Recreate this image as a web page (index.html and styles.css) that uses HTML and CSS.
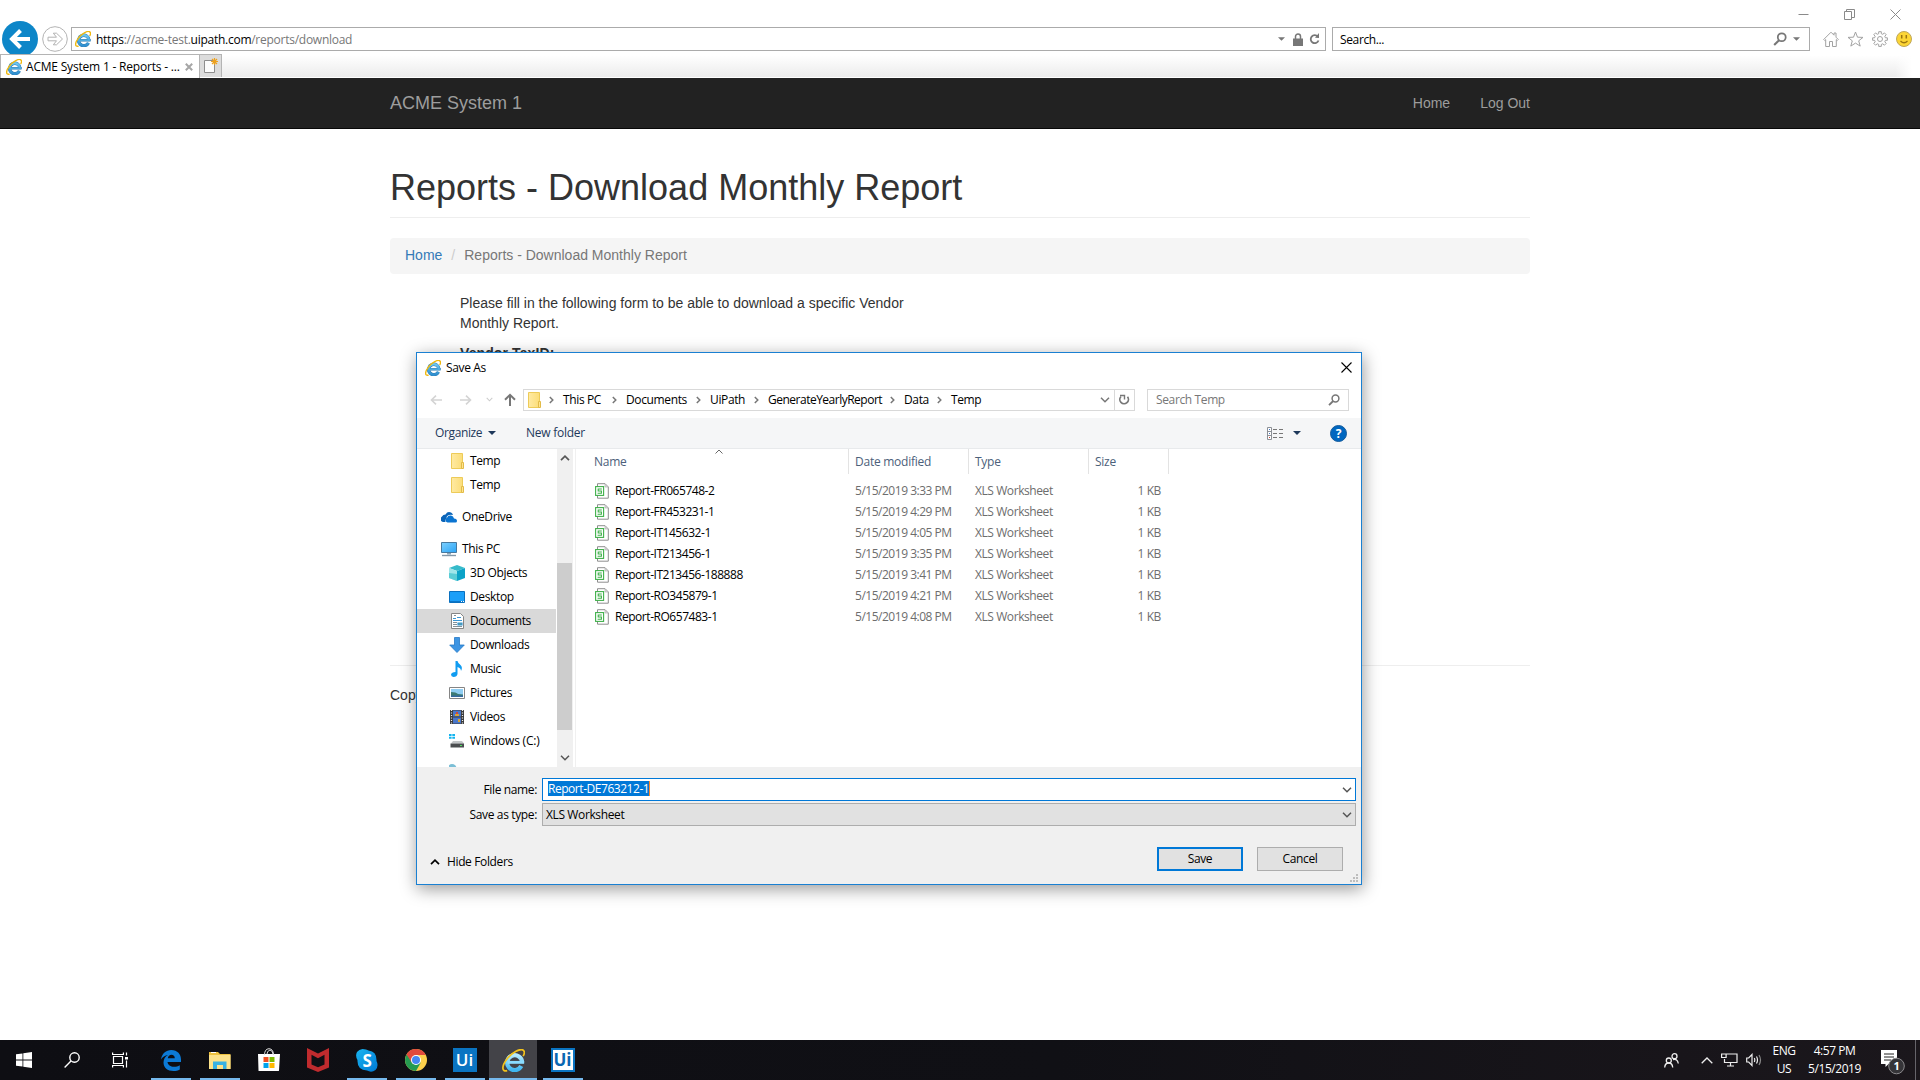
FILE: index.html
```html
<!DOCTYPE html>
<html lang="en">
<head>
<meta charset="utf-8">
<title>ACME System 1 - Reports - Download Monthly Report</title>
<link rel="stylesheet" href="styles.css">
</head>
<body>
<svg class="defs" aria-hidden="true">
  <defs>
    <linearGradient id="ieBlue" x1="0" y1="0" x2="0" y2="1"><stop offset="0" stop-color="#6cc5f0"/><stop offset="1" stop-color="#2f8fd0"/></linearGradient>
    <linearGradient id="ieLight" x1="0" y1="0" x2="0" y2="1"><stop offset="0" stop-color="#b5ecff"/><stop offset="1" stop-color="#3fb6f0"/></linearGradient>
    <linearGradient id="folderFill" x1="0" y1="0" x2="1" y2="0"><stop offset="0" stop-color="#ffeaa3"/><stop offset="1" stop-color="#fbdd78"/></linearGradient>
    <linearGradient id="screenFill" x1="0" y1="0" x2="1" y2="1"><stop offset="0" stop-color="#7cd0ff"/><stop offset="1" stop-color="#2ba4f5"/></linearGradient>
    <linearGradient id="skypeFill" x1="0" y1="0" x2="1" y2="1"><stop offset="0" stop-color="#18b5f0"/><stop offset="1" stop-color="#0078d4"/></linearGradient>
    <symbol id="ie" viewBox="0 0 16 16">
      <path d="M13.400 11.900A5.200 5.200 0 1 1 14 9.400" fill="none" stroke="#2a78ad" stroke-width="3.300"/>
      <path d="M4 9.300H15.600" stroke="#2a78ad" stroke-width="2.400"/>
      <path d="M13.500 11.700A5.200 5.200 0 1 1 14 9.400" fill="none" stroke="url(#ieBlue)" stroke-width="2.500"/>
      <path d="M4 9.300H15.200" stroke="#4fabdf" stroke-width="1.600"/>
      <path d="M3.600 15.100C-.4 16.200-.2 11.800 3.200 7.300C7 2.200 13 -.7 14.900 .9C15.900 1.800 15.500 3.600 14.700 5" fill="none" stroke="#efb810" stroke-width="1.400"/>
    </symbol>
    <symbol id="ie-glow" viewBox="0 0 16 16">
      <path d="M13.400 11.900A5.200 5.200 0 1 1 14 9.400" fill="none" stroke="url(#ieLight)" stroke-width="3"/>
      <path d="M4 9.300H15.400" stroke="#8adcff" stroke-width="2"/>
      <path d="M3.600 15.100C-.4 16.200-.2 11.800 3.200 7.300C7 2.200 13 -.7 14.900 .9C15.900 1.800 15.500 3.600 14.700 5" fill="none" stroke="#f2c21c" stroke-width="1.200"/>
    </symbol>
    <symbol id="folder" viewBox="0 0 13 16">
      <path d="M.5.5h11v15H.5z" fill="url(#folderFill)" stroke="#edcb58"/>
      <path d="M10.500 9.500h2v6h-2z" fill="#ffe48f" stroke="#e2bb48"/>
    </symbol>
    <symbol id="sheet" viewBox="0 0 14 16">
      <path d="M2.500.700h7.500l3.300 3.300v11.200H2.500z" fill="#fff" stroke="#8e8e8e"/>
      <path d="M10 .7v3.300h3.300z" fill="#ddd" stroke="#aaa" stroke-width=".6"/>
      <rect x=".6" y="3.600" width="8" height="8.800" fill="#fff" stroke="#3fb04a" stroke-width="1.100"/>
      <path d="M6.800 6H3.200v2h3.200v2.200H2.600" fill="none" stroke="#3fb04a" stroke-width="1.100"/>
    </symbol>
    <symbol id="chev-r" viewBox="0 0 5 8"><path d="M.8 1l3 3-3 3" fill="none" stroke="#777" stroke-width="1.500"/></symbol>
    <symbol id="chev-d" viewBox="0 0 10 6"><path d="M1 .8l4 4 4-4" fill="none" stroke="currentColor" stroke-width="1.500"/></symbol>
    <symbol id="chev-u" viewBox="0 0 10 6"><path d="M1 5.200l4-4 4 4" fill="none" stroke="currentColor" stroke-width="1.700"/></symbol>
    <symbol id="tri" viewBox="0 0 8 4"><path d="M0 0h8L4 4z" fill="currentColor"/></symbol>
    <symbol id="lens" viewBox="0 0 12 12"><circle cx="7.500" cy="4.500" r="3.400" fill="none" stroke="currentColor" stroke-width="1.500"/><path d="M5.200 7L1 11.200" stroke="currentColor" stroke-width="1.800"/></symbol>
  </defs>
</svg>

<header class="chrome">
  <div class="window-controls">
    <svg width="11" height="11"><path d="M.5 5.500h10" stroke="#8a8a8a"/></svg>
    <svg width="11" height="11" fill="none" stroke="#8a8a8a"><path d="M.5 2.500h7v8h-7zM2.500 2.500v-2h8v8h-3"/></svg>
    <svg width="11" height="11"><path d="M.5.5l10 10M10.500.5l-10 10" stroke="#8a8a8a"/></svg>
  </div>
  <div class="address-row">
    <svg class="back" viewBox="0 0 36 36"><circle cx="18" cy="18" r="18" fill="#0d86c8"/><path d="M28 18H10M18.500 9.500L10 18l8.500 8.500" fill="none" stroke="#fff" stroke-width="4"/></svg>
    <svg class="forward" viewBox="0 0 26 26" fill="none" stroke="#b3b3b3"><circle cx="13" cy="13" r="12.300"/><path d="M6 11.200h8.500l-3.200-4h3.200l6 5.800-6 5.800h-3.200l3.200-4H6z"/></svg>
    <div class="address">
      <svg width="16" height="16"><use href="#ie"/></svg>
      <span class="url"><b>https</b>://acme-test.<b>uipath.com</b>/reports/download</span>
      <svg class="addr-tri" width="7" height="4"><use href="#tri"/></svg>
      <svg class="lock" width="10" height="13" viewBox="0 0 10 13"><path d="M2.500 6V3.500a2.500 2.500 0 0 1 5 0V6" fill="none" stroke="#777" stroke-width="1.500"/><path d="M0 5.500h10V13H0z" fill="#777"/></svg>
      <svg width="11" height="12" viewBox="0 0 11 12"><path d="M8.800 3.600A4 4 0 1 0 9.500 7.500" fill="none" stroke="#777" stroke-width="1.800"/><path d="M6 4.800L10 5V0z" fill="#777"/></svg>
    </div>
    <div class="search">
      <span>Search...</span>
      <svg width="14" height="14"><use href="#lens"/></svg>
      <svg class="search-tri" width="7" height="4"><use href="#tri"/></svg>
    </div>
    <div class="tools">
      <svg width="16" height="16" fill="none" stroke="#a2a2a2"><path d="M.7 8.500L8 1.200l3 3V2h2v4.200l2.300 2.300-1 1-1-.9v6.900H9.500v-5h-3v5H2.700V8.600l-1 .9z"/></svg>
      <svg width="17" height="16" viewBox="0 0 17 16" fill="none" stroke="#a2a2a2"><path d="M8.500 1l2 5.200 5.500.2-4.300 3.400 1.500 5.300-4.700-3-4.700 3 1.500-5.300L1 6.400l5.500-.2z"/></svg>
      <svg width="16" height="16" viewBox="0 0 16 16" fill="none" stroke="#a2a2a2"><path d="M6.700.7h2.600v2l1.500.6 1.600-1.400 1.800 1.800-1.400 1.600.6 1.500h2v2.500h-2l-.6 1.500 1.400 1.600-1.800 1.800-1.600-1.400-1.500.6v2H6.700v-2l-1.500-.6-1.600 1.400-1.800-1.800 1.400-1.600-.6-1.500h-2V6.800h2l.6-1.500-1.400-1.600 1.800-1.800 1.600 1.400 1.500-.6z"/><circle cx="8" cy="8" r="2.500"/></svg>
      <svg width="16" height="16"><circle cx="8" cy="8" r="7.500" fill="#fcd535" stroke="#bfa75a"/><path d="M5.700 4v3.400M10.300 4v3.400" stroke="#9a7410" stroke-width="1.500"/><path d="M4.500 10q3.500 3.500 7 0" fill="none" stroke="#9a7410" stroke-width="1.200"/></svg>
    </div>
  </div>
  <div class="tabs">
    <div class="tab">
      <svg width="16" height="16"><use href="#ie"/></svg>
      <span>ACME System 1 - Reports - ...</span>
      <svg class="tab-x" width="8" height="8"><path d="M.8.8l6.400 6.400M7.200.8L.8 7.200" stroke="#a6a6a6" stroke-width="2"/></svg>
    </div>
    <div class="new-tab"><svg width="14" height="15"><path d="M.5 2.500h10v12H.5z" fill="#fcfcfc" stroke="#8e8e8e"/><path d="M10.500 0v7M7 3.500h7M8 1l5 5M13 1L8 6" stroke="#eda11e" stroke-width="1.200"/></svg></div>
  </div>
</header>

<main class="site">
  <nav class="navbar"><div class="container nav-inner"><span class="brand">ACME System 1</span><span>Home</span><span>Log Out</span></div></nav>
  <div class="container">
    <h1>Reports - Download Monthly Report</h1>
    <div class="crumbs"><a>Home</a><i>/</i><span>Reports - Download Monthly Report</span></div>
    <div class="form"><p>Please fill in the following form to be able to download a specific Vendor Monthly Report.</p><label>Vendor TaxID:</label></div>
    <footer>Copyright</footer>
  </div>
</main>

<section class="dialog">
  <div class="dlg-title">
    <svg width="16" height="16"><use href="#ie"/></svg><span>Save As</span>
    <svg class="dlg-close" width="11" height="11"><path d="M.5.5l10 10M10.500.5l-10 10" stroke="#000" stroke-width="1.100"/></svg>
  </div>
  <div class="dlg-nav">
    <svg class="nav-back" width="12" height="10" fill="none" stroke="#d4d4d4" stroke-width="1.600"><path d="M12 5H1.500M6 .7L1.500 5 6 9.300"/></svg>
    <svg class="nav-fwd" width="12" height="10" fill="none" stroke="#d4d4d4" stroke-width="1.600"><path d="M0 5h10.500M6 .7L10.500 5 6 9.300"/></svg>
    <svg class="nav-recent" width="7" height="5"><use href="#chev-d"/></svg>
    <svg class="nav-up" width="12" height="13" fill="none" stroke="#777" stroke-width="2"><path d="M6 13V2M1 6.800l5-5 5 5"/></svg>
    <div class="path">
      <svg class="path-folder" width="13" height="16"><use href="#folder"/></svg>
      <svg class="sep" width="5" height="8"><use href="#chev-r"/></svg><span class="w-pc">This PC</span>
      <svg class="sep" width="5" height="8"><use href="#chev-r"/></svg><span class="w-docs">Documents</span>
      <svg class="sep" width="5" height="8"><use href="#chev-r"/></svg><span class="w-ui">UiPath</span>
      <svg class="sep" width="5" height="8"><use href="#chev-r"/></svg><span class="w-gen">GenerateYearlyReport</span>
      <svg class="sep" width="5" height="8"><use href="#chev-r"/></svg><span class="w-data">Data</span>
      <svg class="sep" width="5" height="8"><use href="#chev-r"/></svg><span class="w-temp">Temp</span>
      <svg class="path-drop" width="10" height="6"><use href="#chev-d"/></svg>
      <span class="reload"><svg width="11" height="12"><path d="M2 2.500A4.300 4.300 0 1 0 8.500 2.800" fill="none" stroke="#777" stroke-width="1.700"/><path d="M1 1.500h4.500v4" fill="none" stroke="#777" stroke-width="1.400"/></svg></span>
    </div>
    <div class="find"><span>Search Temp</span><svg width="12" height="12"><use href="#lens"/></svg></div>
  </div>
  <div class="toolbar">
    <span class="organize">Organize</span><svg class="org-tri" width="8" height="4"><use href="#tri"/></svg><span class="new-folder">New folder</span>
    <svg class="view" width="16" height="13"><path d="M.5.500h4v12h-4zM.5 4.500h4M.5 8.500h4" fill="#fff" stroke="#8c9096"/><path d="M6 2.500h10M6 6.500h10M6 10.500h10" stroke="#777" stroke-dasharray="4 2"/><path d="M2 2.500h1M2 6.500h1" stroke="#467ac5"/><path d="M2 10.500h1" stroke="#c43"/></svg>
    <svg class="view-tri" width="8" height="4"><use href="#tri"/></svg>
    <span class="help">?</span>
  </div>
  <div class="browse">
    <ul class="tree">
      <li class="sub"><svg class="fold"><use href="#folder"/></svg>Temp</li>
      <li class="sub"><svg class="fold"><use href="#folder"/></svg>Temp</li>
      <li class="root"><svg viewBox="0 0 16 16"><path d="M2 13a3 3 0 0 1-1-5.500Q2 5.500 4.500 5.500 6.500 2 10 3.500q1.500.7 2 2.500Q5.500 5 5.500 9.500 4 10.500 4.500 13z" fill="#0a64b8"/><path d="M6.500 13.500a2.500 2.500 0 0 1-.5-4.700Q7 6 10 6.500q2.500.5 3 3 3 .3 3 2.500 0 1.500-1.500 1.500z" fill="#0a74d1"/></svg>OneDrive</li>
      <li class="root"><svg viewBox="0 0 16 16"><path d="M.5 1.500h15v10H.5z" fill="url(#screenFill)" stroke="#47799f"/><path d="M6 12h4v1.500H6z" fill="#8ba5b8"/><path d="M1 14.500h14" stroke="#8398a8" stroke-width="1.400"/></svg>This PC</li>
      <li class="sub"><svg viewBox="0 0 16 16"><path d="M0 3l8-3 8 3-8 3z" fill="#36bbca"/><path d="M0 3l8 3v10l-8-3z" fill="#9fe5ea"/><path d="M16 3L8 6v10l8-3z" fill="#0ba2c7"/><path d="M0 8l8 1v7l-8-3z" fill="#5accd6"/></svg>3D Objects</li>
      <li class="sub"><svg viewBox="0 0 16 16"><path d="M.5 2.500h15v11H.5z" fill="#1c9ff8" stroke="#0a70bf"/><path d="M1 12.500h14" stroke="#0b76c8"/><path d="M12 12.500h1M14 12.500h1" stroke="#fff"/></svg>Desktop</li>
      <li class="sub selected"><svg viewBox="0 0 16 16"><path d="M2.500.5h9l3 3v12h-12z" fill="#fff" stroke="#858585"/><path d="M4 5.500h3M8 4.500h4M4 7.500h9M9 10h4v2H9z" stroke="#3b97d3" stroke-width="1.200" fill="#5d9f8f"/><path d="M5 2.500h2M4 9.500h4M4 11.500h4M4 13.500h9" stroke="#829099"/></svg>Documents</li>
      <li class="sub"><svg viewBox="0 0 16 16"><path d="M5.500.5h5V8h4.800L8 15.500.7 8h4.800z" fill="#3d95e3" stroke="#2479c7" stroke-width=".8"/></svg>Downloads</li>
      <li class="sub"><svg viewBox="0 0 16 16"><path d="M6.500 0h2q.5 2.500 3 4 2.500 2.500.5 6 0-3-3.500-4V13q-.5 3-4 3Q2 15.700 2 13.500q.5-2.500 4.500-2.500z" fill="#109cf1"/></svg>Music</li>
      <li class="sub"><svg viewBox="0 0 16 16"><path d="M.5 2.500h15v11H.5z" fill="#fff" stroke="#858585"/><path d="M2 4h12v8H2z" fill="#8fcdf2"/><path d="M2 7q5 0 7 2l5 .5V12H2z" fill="#3d7a73"/><path d="M2 10.500h12V12H2z" fill="#356aa0"/></svg>Pictures</li>
      <li class="sub"><svg viewBox="0 0 16 16"><path d="M1 1h14v14H1z" fill="#3b3b3b"/><path d="M4 1.500h8v6H4zM4 8.500h8v6H4z" fill="#4976c9"/><path d="M6 5h4v2H6zM9 10h2v3H9z" fill="#d9a335"/><path d="M7 3h2v2H7z" fill="#d0473c"/><path d="M2.500 1v14M13.500 1v14" stroke="#eee" stroke-width="1.200" stroke-dasharray="1 1.500"/></svg>Videos</li>
      <li class="sub wide"><svg viewBox="0 0 16 16"><path d="M0 1h2.600v2H0zM3.300 1H6v2H3.300zM0 3.700h2.600v2H0zM3.300 3.700H6v2H3.300z" fill="#12b4f0"/><path d="M4 8h9l2 2.500H2z" fill="#c2c5c7"/><path d="M1.500 10.500h13.500v4H1.500z" fill="#4b4e50"/><path d="M11 12.500h2" stroke="#50e060"/></svg>Windows (C:)</li>
      <li class="sub last"><svg viewBox="0 0 16 16"><circle cx="3" cy="4.500" r="4.500" fill="#7cbfd6"/></svg></li>
    </ul>
    <div class="scroll"><svg width="10" height="6"><use href="#chev-u"/></svg><i></i><svg width="10" height="6"><use href="#chev-d"/></svg></div>
    <div class="files">
      <svg class="sort" width="8" height="5"><path d="M.5 4.500L4 1l3.500 3.500" fill="none" stroke="#666"/></svg>
      <div class="frow fhead"><span class="c-name">Name</span><span class="c-date">Date modified</span><span class="c-type">Type</span><span class="c-size">Size</span></div>
      <div class="frow"><span class="c-name"><svg><use href="#sheet"/></svg>Report-FR065748-2</span><span class="c-date">5/15/2019 3:33 PM</span><span class="c-type">XLS Worksheet</span><span class="c-size">1 KB</span></div>
      <div class="frow"><span class="c-name"><svg><use href="#sheet"/></svg>Report-FR453231-1</span><span class="c-date">5/15/2019 4:29 PM</span><span class="c-type">XLS Worksheet</span><span class="c-size">1 KB</span></div>
      <div class="frow"><span class="c-name"><svg><use href="#sheet"/></svg>Report-IT145632-1</span><span class="c-date">5/15/2019 4:05 PM</span><span class="c-type">XLS Worksheet</span><span class="c-size">1 KB</span></div>
      <div class="frow"><span class="c-name"><svg><use href="#sheet"/></svg>Report-IT213456-1</span><span class="c-date">5/15/2019 3:35 PM</span><span class="c-type">XLS Worksheet</span><span class="c-size">1 KB</span></div>
      <div class="frow"><span class="c-name"><svg><use href="#sheet"/></svg>Report-IT213456-188888</span><span class="c-date">5/15/2019 3:41 PM</span><span class="c-type">XLS Worksheet</span><span class="c-size">1 KB</span></div>
      <div class="frow"><span class="c-name"><svg><use href="#sheet"/></svg>Report-RO345879-1</span><span class="c-date">5/15/2019 4:21 PM</span><span class="c-type">XLS Worksheet</span><span class="c-size">1 KB</span></div>
      <div class="frow"><span class="c-name"><svg><use href="#sheet"/></svg>Report-RO657483-1</span><span class="c-date">5/15/2019 4:08 PM</span><span class="c-type">XLS Worksheet</span><span class="c-size">1 KB</span></div>
    </div>
  </div>
  <div class="fields">
    <label>File name:</label><div class="input"><mark>Report-DE763212-1</mark><svg width="10" height="6"><use href="#chev-d"/></svg></div>
    <label>Save as type:</label><div class="select"><span>XLS Worksheet</span><svg width="10" height="6"><use href="#chev-d"/></svg></div>
  </div>
  <div class="actions">
    <span class="hide"><svg width="10" height="6"><use href="#chev-u"/></svg>Hide Folders</span>
    <span class="btn primary">Save</span><span class="btn">Cancel</span>
    <svg class="grip" width="8" height="8" fill="#bdbdbd"><path d="M6 0h2v2H6zM3 3h2v2H3zM6 3h2v2H6zM0 6h2v2H0zM3 6h2v2H3zM6 6h2v2H6z"/></svg>
  </div>
</section>

<footer class="taskbar">
  <div class="app w48"><svg width="16" height="16" fill="#fff"><path d="M0 2.300L6.500 1.400v6.200H0zM7.300 1.300L16 0v7.600H7.300zM0 8.400h6.500v6.200L0 13.700zM7.300 8.400H16V16l-8.700-1.300z"/></svg></div>
  <div class="app w48"><svg width="16" height="16" fill="none" stroke="#fff" stroke-width="1.400"><circle cx="10.500" cy="5.500" r="4.700"/><path d="M7 9L.6 15.400"/></svg></div>
  <div class="app w48"><svg width="16" height="16" fill="none" stroke="#fff" stroke-width="1.200"><path d="M1.500 4.500h9v7h-9zM.6.500v2h10.800v-2M.6 15.500v-2h10.800v2M14.500.500v3M14.500 8.500v7"/><path d="M13 5h3v2.500h-3z" fill="#fff" stroke="none"/></svg></div>
  <div class="app gap-l on"><svg width="20" height="21" viewBox="0 0 20 21"><path d="M0 9.500C1 3.500 5 0 10.300 0 16.500 0 20 4.300 20 9.500V12H6.500c.3 3 3 4.800 6.500 4.800 2.200 0 4-.6 5.800-1.600v4.200C17 20.400 15 21 12.500 21 6.500 21 2.500 17.500 2.500 12.500c0-3.200 1.700-6 4.500-7.500C4 5.200 1.500 7 0 9.500zM6.800 8.300h7c0-2.200-1.300-3.600-3.300-3.600S7.200 6 6.800 8.300z" fill="#0c7ad6"/></svg></div>
  <div class="app on"><svg width="22" height="19"><path d="M0 1h9l2 2h10.500v15H0z" fill="#eec13f"/><path d="M0 4h21.500v14H0z" fill="#fde28a"/><path d="M2 1.500h5" stroke="#fff"/><path d="M4 10.500h13.500V18h-3.500v-4H8v4H4z" fill="#38b2e3"/></svg></div>
  <div class="app"><svg width="24" height="24"><path d="M1 6h22l-1 16.500q0 .5-1 .5H2q-.5 0-.5-.5z" fill="#fff"/><path d="M7.500 7q0-6 4.500-6.300Q16.500 1 16.500 7M10 6q0-3 3-4 3 1 3 4" fill="none" stroke="#ddd"/><path d="M6.500 9h5v5h-5z" fill="#f05022"/><path d="M12.500 9h5v5h-5z" fill="#7eba00"/><path d="M6.500 15h5v5h-5z" fill="#00a2ed"/><path d="M12.500 15h5v5h-5z" fill="#ffb800"/></svg></div>
  <div class="app"><svg width="22" height="24"><path d="M0 0l11 5.500L22 0v19.500L11 24 0 19.500zM4.500 6.800V16.500l6.500 2.700 6.500-2.700V6.800L11 10.200z" fill="#c02b2e" fill-rule="evenodd"/></svg></div>
  <div class="app on"><svg width="22" height="23"><path d="M6.500 0q4 0 6 1.500Q21 2.500 20.500 12q2.500 5-1 9-4 3-8.500.5Q1 21 1.500 11-1 7 1 3 3 .3 6.500 0z" fill="url(#skypeFill)"/><text x="11" y="17.500" class="skype-s" text-anchor="middle">S</text></svg></div>
  <div class="app on"><svg width="22" height="22" viewBox="-11 -11 22 22"><circle r="11" fill="#fdd04c"/><path d="M0 0L-9.500-5.500A11 11 0 0 0 0 11L4.700 2.700z" fill="#259b51"/><path d="M0 0v-5H9.700A11 11 0 0 0-9.500-5.500L-4.300 2.500z" fill="#e14a3d"/><circle r="5" fill="#fff"/><circle r="4" fill="#4587f3"/></svg></div>
  <div class="app on"><span class="ui">Ui</span></div>
  <div class="app on active"><svg width="23" height="23"><use href="#ie-glow"/></svg></div>
  <div class="app on"><span class="ui inverse">Ui</span></div>
  <div class="tray">
    <svg class="people" width="15" height="15" fill="none" stroke="#eee" stroke-width="1.300"><circle cx="10.500" cy="3.200" r="2.500"/><circle cx="4.800" cy="7.500" r="2.500"/><path d="M.7 14.500q.3-4.500 4-4.500t4 4.500M9 6.500q4.500-1.200 5.300 4"/></svg>
    <svg class="up" width="12" height="7" fill="none" stroke="#eee" stroke-width="1.300"><path d="M.7 6.300L6 1l5.300 5.300"/></svg>
    <svg class="net" width="17" height="14" fill="none" stroke="#eee" stroke-width="1.200"><path d="M5 1h11v8.500H3.500V6M.6 1h4.500v3.500H.6zM9.500 9.500V13M6 13h7"/></svg>
    <svg class="vol" width="16" height="14" fill="none" stroke="#eee" stroke-width="1.200"><path d="M.7 5h2L6 1.500v11L2.700 9h-2zM8.300 5q1 2 0 4M10.500 3.500q2 3.500 0 7"/><path d="M13 2q3 5 0 10" stroke="#888"/></svg>
    <span class="lang">ENG<br>US</span>
    <span class="clock">4:57 PM<br>5/15/2019</span>
    <svg class="note" width="26" height="26"><path d="M1 1h16v14h-8.500L5.500 18v-3H1z" fill="#fff"/><path d="M4 5h10M4 8h10M4 11h7" stroke="#222"/><circle cx="16.500" cy="17" r="7.800" fill="#353438" stroke="#8b8a8d"/><text x="16.500" y="21" text-anchor="middle" class="note-n">1</text></svg>
    <i class="peek"></i>
  </div>
</footer>
</body>
</html>
```
FILE: styles.css
```css
* { box-sizing: border-box; }
body {
  margin: 0; width: 1920px; height: 1080px; overflow: hidden; background: #fff;
  display: flex; flex-direction: column;
  font: 12px/16px "Open Sans", "Noto Sans", sans-serif; letter-spacing: -0.37px; color: #000;
}
svg { display: block; flex: none; }
span { white-space: nowrap; }
.defs { width: 0; height: 0; position: absolute; }

/* Browser frame */
.chrome { height: 78px; flex: none; display: flex; flex-direction: column; }
.window-controls { height: 27px; flex: none; display: flex; justify-content: flex-end; gap: 35px; padding: 9px 19px 0 0; }
.address-row { height: 24px; flex: none; display: flex; align-items: center; padding-left: 2px; margin-bottom: 3px; }
.back { width: 36px; height: 36px; }
.forward { width: 26px; height: 26px; margin: 0 3px 0 4px; }
.address { width: 1255px; height: 24px; border: 1px solid #ababab; display: flex; align-items: center; padding: 0 5px 0 3px; color: #777; }
.url { margin-left: 5px; flex: 1; letter-spacing: -0.26px; padding-top: 2px; }
.url b { font-weight: 400; color: #000; }
.addr-tri { margin-right: 8px; }
.lock { margin-right: 6px; }
.search { width: 478px; height: 24px; border: 1px solid #ababab; margin-left: 6px; padding: 0 9px 0 7px; display: flex; align-items: center; color: #777; }
.search span { flex: 1; color: #000; padding-top: 2px; }
.search-tri { margin-left: 6px; }
.tools { display: flex; gap: 8px; margin-left: 13px; }
.tabs { height: 24px; flex: none; display: flex; background: linear-gradient(90deg, transparent 1895px, #fff 1912px), linear-gradient(#fff 5%, #ececec 94%, #fff 96%); }
.tab { width: 200px; height: 24px; background: #fff; border: 1px solid #b4b4b4; border-bottom: 0; display: flex; align-items: center; padding-left: 5px; }
.tab span { margin-left: 4px; width: 155px; letter-spacing: -.2px; }
.tab-x { margin-left: 4px; }
.new-tab { width: 22px; height: 23px; background: #dcdcdc; border: 1px solid #b4b4b4; border-left: 0; border-bottom: 0; padding: 3px 0 0 4px; }

/* Web page */
.site { flex: 1; font: 14px/20px "Liberation Sans", Arial, sans-serif; letter-spacing: 0; color: #333; }
.container { width: 1140px; margin: 0 auto; }
.navbar { height: 51px; background: #222; border-bottom: 1px solid #080808; color: #9d9d9d; }
.nav-inner { display: flex; gap: 30px; padding-top: 15px; }
.brand { font-size: 18px; flex: 1; }
h1 { font-size: 36px; line-height: 40px; font-weight: 400; margin: 39px 0 20px; padding-bottom: 9px; border-bottom: 1px solid #eee; }
.crumbs { height: 36px; background: #f5f5f5; border-radius: 4px; padding: 7px 15px; display: flex; color: #777; }
.crumbs a { color: #337ab7; }
.crumbs i { font-style: normal; color: #ccc; padding: 0 9px; }
.form { width: 455px; margin: 19px 0 0 70px; height: 372px; }
.form p { margin: 0 0 10px; }
.form label { font-weight: 700; letter-spacing: .1px; }
.site footer { border-top: 1px solid #eee; padding-top: 19px; }

/* Save dialog */
.dialog {
  position: absolute; left: 416px; top: 352px; width: 946px; height: 533px; background: #fff;
  border: 1px solid #1a80d2; box-shadow: 1px 4px 16px rgba(0,0,0,.4);
  display: flex; flex-direction: column;
}
.dlg-title { height: 29px; flex: none; display: flex; align-items: center; padding: 0 9px 0 8px; }
.dlg-title span { margin-left: 5px; flex: 1; }
.dlg-nav { height: 36px; flex: none; display: flex; align-items: center; padding: 0 0 1px 13px; color: #777; }
.nav-fwd { margin-left: 18px; }
.nav-recent { margin: 0 11px 0 14px; color: #ccc; }
.nav-up { margin-right: 7px; }
.path { width: 612px; height: 22px; border: 1px solid #d9d9d9; display: flex; align-items: center; padding-left: 4px; color: #000; }
.path-folder { margin-right: 8px; }
.sep { margin-right: 9px; }
.w-pc { width: 49px; } .w-docs { width: 70px; } .w-ui { width: 44px; }
.w-gen { width: 122px; letter-spacing: -.5px; } .w-data { width: 33px; } .w-temp { flex: 1; }
.path-drop { color: #777; margin-right: 4px; }
.reload { width: 20px; height: 20px; border-left: 1px solid #d9d9d9; display: grid; place-items: center; }
.find { width: 202px; height: 22px; margin-left: 12px; border: 1px solid #d9d9d9; display: flex; align-items: center; justify-content: space-between; padding: 0 8px; color: #777; }
.toolbar { height: 31px; flex: none; background: #f5f6f7; border-bottom: 1px solid #e8eaec; display: flex; align-items: center; padding: 0 14px 0 18px; color: #1e395b; }
.organize { width: 53px; }
.new-folder { margin-left: 30px; flex: 1; letter-spacing: -.25px; }
.view-tri { margin: 0 29px 0 10px; }
.help { width: 17px; height: 17px; border-radius: 50%; background: #0067c0; border: 1px solid #165c9c; color: #fff; font-weight: 700; line-height: 15px; text-align: center; }
.browse { height: 318px; flex: none; display: flex; }
.tree { width: 140px; margin: 0; padding: 0; list-style: none; overflow: hidden; display: flex; flex-direction: column; }
.tree li { height: 24px; flex: none; display: flex; align-items: center; white-space: nowrap; width: 139px; }
.tree svg { width: 16px; height: 16px; margin-right: 5px; }
.tree svg.fold { width: 13px; margin: 0 6px 0 2px; }
.tree .sub { padding-left: 32px; }
.tree .root { padding-left: 24px; margin: 8px 0; }
.tree .root + .root { margin: 0; }
.tree .wide { letter-spacing: -.2px; }
.tree .last { align-items: flex-start; padding-top: 11px; }
.selected { background: #d9d9d9; }
.scroll { width: 16px; background: #f0f0f0; display: flex; flex-direction: column; align-items: center; padding: 6px 1px 6px 0; color: #555; }
.scroll i { width: 15px; height: 169px; background: #cdcdcd; margin: 102px 0 25px; }
.files { flex: 1; margin-left: 2px; border-left: 1px solid #f0f0f0; position: relative; color: #000; }
.sort { position: absolute; left: 139px; top: 0; }
.frow { height: 21px; display: flex; align-items: center; }
.frow svg { width: 14px; height: 16px; margin-right: 6px; }
.c-name { width: 273px; padding-left: 19px; display: flex; align-items: center; letter-spacing: -.46px; }
.c-date { width: 120px; padding-left: 6px; letter-spacing: -.48px; }
.c-type { width: 120px; padding-left: 6px; letter-spacing: -.42px; }
.c-size { width: 80px; padding-right: 8px; text-align: right; }
.c-date, .c-type, .c-size { color: #6d6d6d; }
.fhead { height: 25px; margin-bottom: 6px; align-items: stretch; }
.fhead span { border-right: 1px solid #e3e3e3; color: #4c607a; line-height: 25px; letter-spacing: -.25px; }
.fhead .c-name { padding-left: 18px; }
.fhead .c-size { text-align: left; padding-left: 6px; }
.fields { background: #f0f0f0; flex: none; padding: 11px 5px 0 0; display: grid; grid-template-columns: 120px 1fr; column-gap: 5px; row-gap: 2px; height: 71px; grid-auto-rows: 23px; align-items: center; }
.fields label { text-align: right; letter-spacing: -.36px; }
.input, .select { height: 23px; border: 1px solid #0078d7; background: #fff; display: flex; align-items: center; justify-content: space-between; padding: 0 3px 0 5px; color: #555; }
.select { border-color: #adadad; background: #e1e1e1; padding-left: 3px; }
.select span { color: #000; letter-spacing: -.38px; }
mark { background: #0078d7; color: #fff; line-height: 15px; height: 15px; border-right: 1px solid #ff8728; margin-bottom: 3px; letter-spacing: -.46px; }
.actions { flex: 1; background: #f0f0f0; display: flex; padding: 9px 4px 0 13px; position: relative; }
.hide { flex: 1; display: flex; align-items: center; gap: 7px; height: 30px; }
.btn { width: 86px; height: 24px; background: #e1e1e1; border: 1px solid #adadad; line-height: 21px; text-align: center; margin-right: 14px; }
.primary { border: 2px solid #0078d7; line-height: 19px; }
.grip { position: absolute; right: 3px; bottom: 2px; }

/* Taskbar */
.taskbar { height: 40px; flex: none; display: flex; background: linear-gradient(90deg, #0e0e13, #101015 55%, #1b171c); color: #fff; }
.app { width: 49px; display: grid; place-items: center; }
.w48 { width: 48px; }
.gap-l { margin-left: 2px; }
.on { background: linear-gradient(#76b9ed, #76b9ed) center bottom / 40px 2px no-repeat; }
.active { background: linear-gradient(#76b9ed, #76b9ed) center bottom / 48px 2px no-repeat, #434348; width: 48px; margin-right: 1px; }
.ui { width: 24px; height: 24px; background: #0a74c2; font: 600 17px/24px "Open Sans", sans-serif; text-align: center; letter-spacing: 0; }
.inverse { background: #fff; color: #0a67b2; border: 2px solid #0a74c2; line-height: 20px; font-weight: 700; }
.skype-s { font: 700 17px "Open Sans", sans-serif; fill: #fff; }
.tray { margin-left: auto; display: flex; align-items: center; text-align: center; line-height: 18px; }
.people { margin-right: 22px; }
.up { margin-right: 8px; }
.net { margin-right: 8px; }
.vol { margin-right: 10px; }
.lang { width: 24px; letter-spacing: -.4px; }
.clock { width: 53px; margin: 0 19px 0 12px; letter-spacing: -.45px; }
.note { margin-top: 4px; }
.note-n { font: 700 11px "Open Sans", sans-serif; fill: #fff; }
.peek { width: 1px; height: 40px; background: #66646a; margin: 0 4px 0 9px; }
```
